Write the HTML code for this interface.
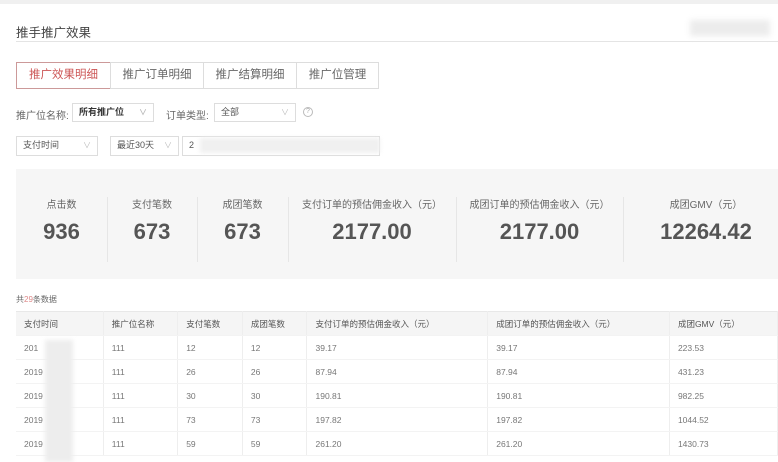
<!DOCTYPE html>
<html><head><meta charset="utf-8"><style>
*{margin:0;padding:0;box-sizing:border-box}
body{width:778px;height:462px;overflow:hidden;background:#fff;font-family:"Liberation Sans","Noto Sans CJK SC",sans-serif;color:#666;position:relative}
.a{position:absolute}
.sel{position:absolute;border:1px solid #ddd;height:19px;font-size:9px;line-height:17px;padding-left:6px;color:#555;background:#fff}
.sel i{position:absolute;right:6px;top:0;font-style:normal;color:#bbb;font-size:8px}
.tab{position:absolute;top:62px;height:27px;border:1px solid #ddd;font-size:11.5px;line-height:25px;text-align:center;color:#666}
.st{position:absolute;top:169px;height:110px;text-align:center}
.st .l{position:absolute;top:27px;width:100%;font-size:10px;color:#666}
.st .n{position:absolute;top:50px;width:100%;font-size:22px;font-weight:bold;color:#555}
.dv{position:absolute;top:197px;width:1px;height:65px;background:#e6e6e6}
table{position:absolute;left:16px;top:311px;border-collapse:collapse;font-size:8.5px;color:#777;table-layout:fixed}
td{height:24px;padding-left:8px;border-right:1px solid #eee;border-bottom:1px solid #f3f3f3}
tr.h td{background:#f5f5f5;color:#555;height:24px;border-top:1px solid #e8e8e8}
</style></head><body>
<div class="a" style="left:0;top:0;width:778px;height:4px;background:#f0f0f0"></div>
<div class="a" style="left:16px;top:22px;font-size:12.5px;color:#444">推手推广效果</div>
<div class="a" style="left:690px;top:20px;width:80px;height:16px;background:#ececec;filter:blur(3px)"></div>
<div class="a" style="left:16px;top:41px;width:762px;height:1px;background:#e4e4e4"></div>
<div class="tab" style="left:16px;width:95px;border-color:#c99;color:#c55">推广效果明细</div>
<div class="tab" style="left:110px;width:94px">推广订单明细</div>
<div class="tab" style="left:203px;width:94px">推广结算明细</div>
<div class="tab" style="left:296px;width:83px">推广位管理</div>
<div class="a" style="left:16px;top:107px;font-size:10px">推广位名称:</div>
<div class="sel" style="left:72px;top:103px;width:82px;color:#333;font-weight:bold">所有推广位<i>∨</i></div>
<div class="a" style="left:166px;top:107px;font-size:10px">订单类型:</div>
<div class="sel" style="left:214px;top:103px;width:82px">全部<i>∨</i></div>
<div class="a" style="left:303px;top:107px;width:10px;height:10px;border:1px solid #bbb;border-radius:50%;font-size:7px;line-height:8px;text-align:center;color:#aaa">?</div>
<div class="sel" style="left:16px;top:136px;width:82px;height:20px">支付时间<i>∨</i></div>
<div class="sel" style="left:110px;top:136px;width:69px;height:20px">最近30天<i>∨</i></div>
<div class="sel" style="left:182px;top:136px;width:198px;height:20px">2</div>
<div class="a" style="left:200px;top:138px;width:180px;height:15px;background:#f0f0f0;filter:blur(2px)"></div>
<div class="a" style="left:16px;top:169px;width:762px;height:110px;background:#f6f6f6"></div>
<div class="st" style="left:16px;width:91px"><div class="l">点击数</div><div class="n">936</div></div>
<div class="st" style="left:107px;width:90px"><div class="l">支付笔数</div><div class="n">673</div></div>
<div class="st" style="left:197px;width:91px"><div class="l">成团笔数</div><div class="n">673</div></div>
<div class="st" style="left:288px;width:168px"><div class="l">支付订单的预估佣金收入（元）</div><div class="n">2177.00</div></div>
<div class="st" style="left:456px;width:167px"><div class="l">成团订单的预估佣金收入（元）</div><div class="n">2177.00</div></div>
<div class="st" style="left:623px;width:166px"><div class="l">成团GMV（元）</div><div class="n">12264.42</div></div>
<div class="dv" style="left:107px"></div><div class="dv" style="left:197px"></div><div class="dv" style="left:288px"></div><div class="dv" style="left:456px"></div><div class="dv" style="left:623px"></div>
<div class="a" style="left:16px;top:294px;font-size:8px;color:#666">共<span style="color:#d88">29</span>条数据</div>
<table>
<colgroup><col style="width:89px"><col style="width:76px"><col style="width:66px"><col style="width:66px"><col style="width:185px"><col style="width:186px"><col style="width:110px"></colgroup>
<tr class="h"><td>支付时间</td><td>推广位名称</td><td>支付笔数</td><td>成团笔数</td><td>支付订单的预估佣金收入（元）</td><td>成团订单的预估佣金收入（元）</td><td>成团GMV（元）</td></tr>
<tr><td>201</td><td>111</td><td>12</td><td>12</td><td>39.17</td><td>39.17</td><td>223.53</td></tr>
<tr><td>2019</td><td>111</td><td>26</td><td>26</td><td>87.94</td><td>87.94</td><td>431.23</td></tr>
<tr><td>2019</td><td>111</td><td>30</td><td>30</td><td>190.81</td><td>190.81</td><td>982.25</td></tr>
<tr><td>2019</td><td>111</td><td>73</td><td>73</td><td>197.82</td><td>197.82</td><td>1044.52</td></tr>
<tr><td>2019</td><td>111</td><td>59</td><td>59</td><td>261.20</td><td>261.20</td><td>1430.73</td></tr>
</table>
<div class="a" style="left:45px;top:340px;width:28px;height:122px;background:#ededed;filter:blur(2px)"></div>
</body></html>
